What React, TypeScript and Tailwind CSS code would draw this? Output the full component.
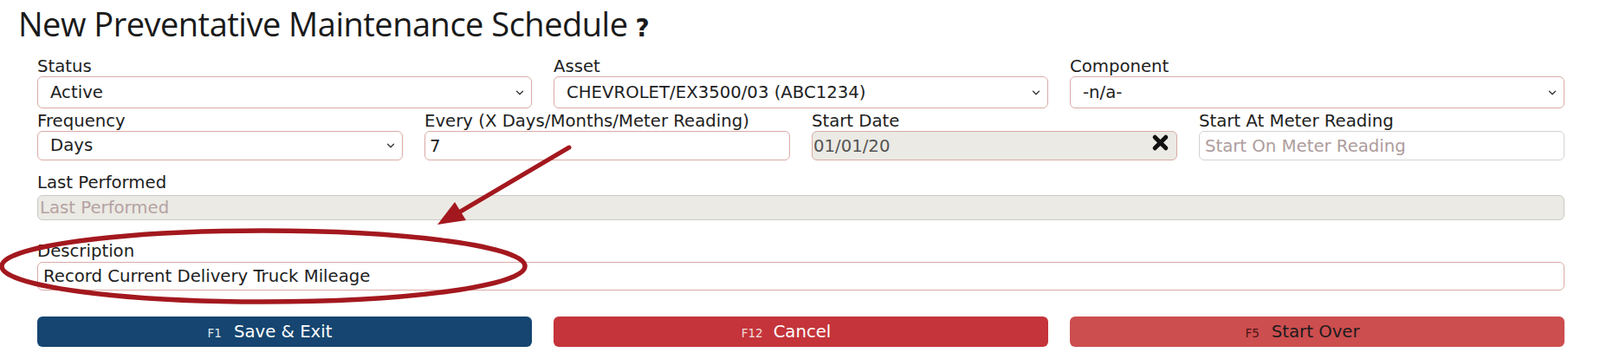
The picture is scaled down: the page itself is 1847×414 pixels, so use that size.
import { ChevronDown } from "lucide-react";

const labelCls = "block text-[19.7px] leading-[22px] text-[#1e1e1e]";
const fieldFont = { fontFamily: '"DejaVu Sans", Verdana, sans-serif' };

function Select({ value, h }: { value: string; h: string }) {
  return (
    <div className="relative">
      <select
        defaultValue={value}
        className={`block w-full ${h} appearance-none rounded-[6px] border border-[#d9aba6] bg-white pl-[14px] text-[19.7px] text-[#1e1e1e] outline-none`}
      >
        <option>{value}</option>
      </select>
      <ChevronDown
        className="pointer-events-none absolute right-[7px] top-1/2 h-[14px] w-[14px] -translate-y-1/2 text-[#333]"
        strokeWidth={2.2}
      />
    </div>
  );
}

export default function App() {
  return (
    <div className="relative h-[414px] w-[1847px] overflow-hidden bg-white" style={fieldFont}>
      <h1
        className="flex items-baseline pl-[21px] text-[38px] font-normal leading-[54px] tracking-[-0.5px] text-[#1a1a1a]"
        style={{ fontFamily: '"Open Sans", sans-serif' }}
      >
        New Preventative Maintenance Schedule
        <span className="ml-[9px] text-[28px] font-bold" style={{ fontFamily: '"DejaVu Sans", sans-serif' }}>
          ?
        </span>
      </h1>

      <div className="pl-[43px] pr-[41px] pt-[6px]">
        {/* Row 1 */}
        <div className="grid grid-cols-3 gap-x-[25px]">
          <div>
            <label className={labelCls}>Status</label>
            <Select value="Active" h="h-[37px]" />
          </div>
          <div>
            <label className={labelCls}>Asset</label>
            <Select value="CHEVROLET/EX3500/03 (ABC1234)" h="h-[37px]" />
          </div>
          <div>
            <label className={labelCls}>Component</label>
            <Select value="-n/a-" h="h-[37px]" />
          </div>
        </div>

        {/* Row 2 */}
        <div className="mt-[4px] grid grid-cols-4 gap-x-[25px]">
          <div>
            <label className={labelCls}>Frequency</label>
            <Select value="Days" h="h-[34px]" />
          </div>
          <div>
            <label className={labelCls}>Every (X Days/Months/Meter Reading)</label>
            <input
              readOnly
              value="7"
              className="block h-[34px] w-full rounded-[6px] border border-[#d9aba6] bg-white px-[5px] text-[19.7px] text-[#1e1e1e] outline-none"
            />
          </div>
          <div>
            <label className={labelCls}>Start Date</label>
            <div className="relative">
              <input
                readOnly
                value="01/01/20"
                className="block h-[34px] w-full rounded-[6px] border border-[#d9aba6] bg-[#ebeae4] px-[1px] text-[19.7px] text-[#555] outline-none"
              />
              <svg
                viewBox="0 0 20 20"
                className="pointer-events-none absolute right-[9px] top-[3px] h-[21px] w-[21px]"
              >
                <path d="M4 4 L16 16 M16 4 L4 16" stroke="#111" strokeWidth="4.8" strokeLinecap="round" />
              </svg>
            </div>
          </div>
          <div>
            <label className={labelCls}>Start At Meter Reading</label>
            <input
              readOnly
              placeholder="Start On Meter Reading"
              className="block h-[34px] w-full rounded-[6px] border border-[#d6d2d2] bg-white px-[6px] text-[19.7px] text-[#1e1e1e] outline-none placeholder:text-[#ae9c9c]"
            />
          </div>
        </div>

        {/* Row 3 */}
        <div className="mt-[15px]">
          <label className={labelCls}>Last Performed</label>
          <input
            readOnly
            placeholder="Last Performed"
            className="mt-[3px] block h-[29px] w-full rounded-[6px] border border-[#c9c9c9] bg-[#ebeae4] px-[2px] text-[19.7px] outline-none placeholder:text-[#b5a3a3]"
          />
        </div>

        {/* Row 4 */}
        <div className="mt-[25px]">
          <label className={labelCls}>Description</label>
          <input
            readOnly
            value="Record Current Delivery Truck Mileage"
            className="mt-[1px] block h-[33px] w-full rounded-[6px] border border-[#d9aba6] bg-white px-[6px] text-[19.7px] text-[#1e1e1e] outline-none"
          />
        </div>

        {/* Buttons */}
        <div className="mt-[30px] grid grid-cols-3 gap-x-[25px]">
          <button className="flex h-[35px] items-center justify-center rounded-[6px] bg-[#154570] pr-[34px] text-white">
            <span>
              <span className="mr-[14px] text-[13.5px] text-[#dfe6ee]">F1</span>
              <span className="text-[19.7px]">Save &amp; Exit</span>
            </span>
          </button>
          <button className="flex h-[35px] items-center justify-center rounded-[6px] bg-[#c4343a] pr-[34px] text-white">
            <span>
              <span className="mr-[12px] text-[13.5px] text-[#f3dcdc]">F12</span>
              <span className="text-[19.7px]">Cancel</span>
            </span>
          </button>
          <button className="flex h-[35px] items-center justify-center rounded-[6px] bg-[#cd4e4f] pr-[34px] text-[#1c1c1c]">
            <span>
              <span className="mr-[14px] text-[13.5px] text-[#4a1414]">F5</span>
              <span className="text-[19.7px]">Start Over</span>
            </span>
          </button>
        </div>
      </div>

      {/* Annotation overlay */}
      <svg className="pointer-events-none absolute left-0 top-0" width="1847" height="414">
        <ellipse cx="304" cy="307" rx="302" ry="41" fill="none" stroke="#a3181e" strokeWidth="5.5" />
        <line x1="657" y1="170" x2="528" y2="246" stroke="#a3181e" strokeWidth="5" strokeLinecap="round" />
        <polygon points="505,259 538,254 525,233" fill="#a3181e" />
      </svg>
    </div>
  );
}
